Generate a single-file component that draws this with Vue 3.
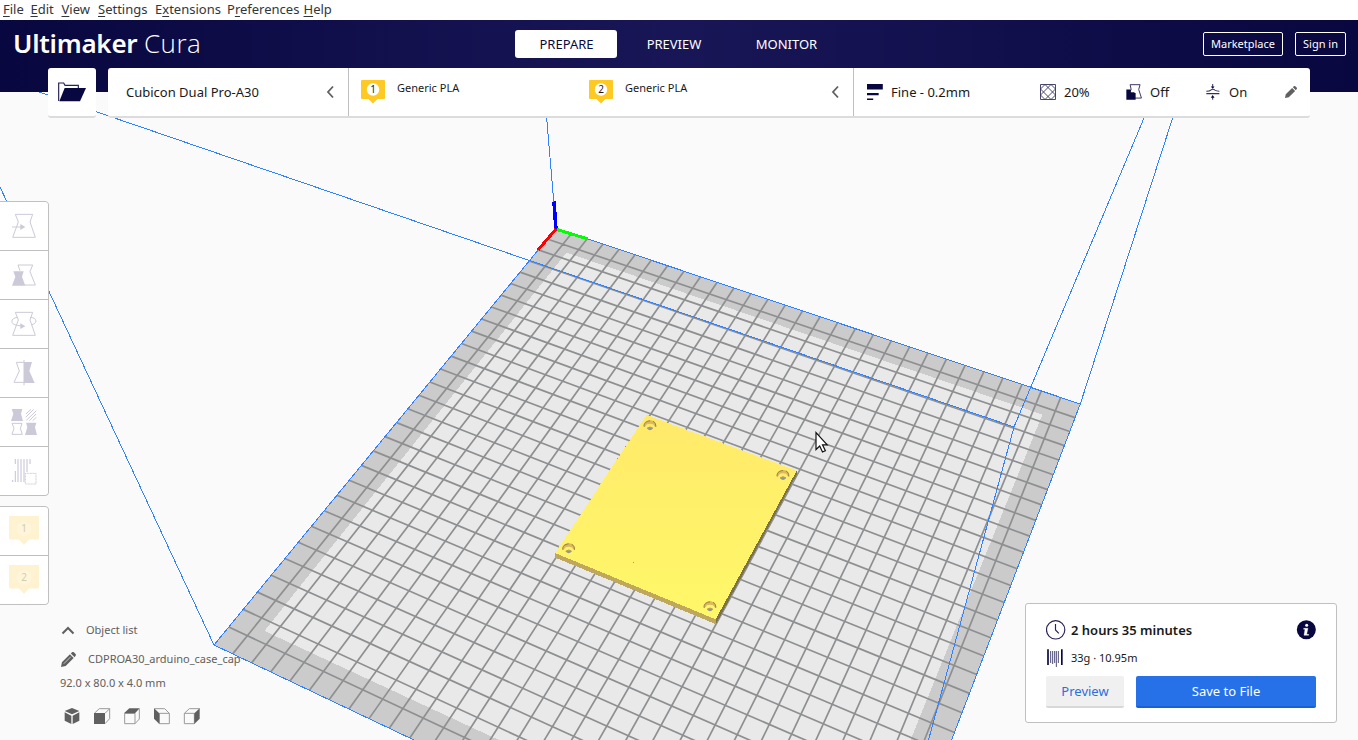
<script setup>
const menus = [
  { pre: '', key: 'F', post: 'ile', w: 27.5 },
  { pre: '', key: 'E', post: 'dit', w: 31 },
  { pre: '', key: 'V', post: 'iew', w: 36.5 },
  { pre: '', key: 'S', post: 'ettings', w: 57 },
  { pre: 'E', key: 'x', post: 'tensions', w: 72 },
  { pre: 'P', key: 'r', post: 'eferences', w: 76.5 },
  { pre: '', key: 'H', post: 'elp', w: 40 },
]
const materials = [
  { id: 1, name: 'Generic PLA' },
  { id: 2, name: 'Generic PLA' },
]

// Perspective projection of the unit build plate onto the viewport.
const A = [556, 228.3]
const B = [1080.3, 404]
const C = [214, 645]
const D = [868.8, 956]
const d1 = [B[0] - D[0], B[1] - D[1]]
const d2 = [C[0] - D[0], C[1] - D[1]]
const s = [A[0] - B[0] + D[0] - C[0], A[1] - B[1] + D[1] - C[1]]
const det = d1[0] * d2[1] - d1[1] * d2[0]
const g = (s[0] * d2[1] - s[1] * d2[0]) / det
const h = (d1[0] * s[1] - d1[1] * s[0]) / det
function project(u, v) {
  const w = 1 + g * u + h * v
  return [0, 1].map((i) =>
    ((A[i] + (B[i] - A[i] + g * B[i]) * u + (C[i] - A[i] + h * C[i]) * v) / w).toFixed(2)
  )
}
const quad = (m) =>
  [[m, m], [1 - m, m], [1 - m, 1 - m], [m, 1 - m]].map(([u, v]) => project(u, v).join(',')).join(' ')
const plate = quad(0)
const printable = quad(0.0505)
const cells = 30
let grid = ''
for (let i = 1; i < cells; i++) {
  const t = i / cells
  grid += `M${project(t, 0)}L${project(t, 1)}M${project(0, t)}L${project(1, t)}`
}
const holes = [[330, 76], [729, 225], [86, 445], [510, 619]].map(([x, y]) => [540 + x / 3, 400 + y / 3])
</script>

<template>
  <div class="window">
    <nav class="menubar">
      <span v-for="m in menus" :key="m.post" class="menu" :style="{ width: m.w + 'px' }">{{ m.pre }}<u>{{ m.key }}</u>{{ m.post }}</span>
    </nav>

    <header class="header">
      <div class="logo"><b>Ultimaker</b><span>Cura</span></div>
      <div class="stages">
        <button class="stage active">PREPARE</button>
        <button class="stage">PREVIEW</button>
        <button class="stage">MONITOR</button>
      </div>
      <div class="account">
        <button class="market">Marketplace</button>
        <button class="sign">Sign in</button>
      </div>
    </header>

    <main class="viewport">
      <svg class="scene" width="1358" height="648" viewBox="0 92 1358 648">
        <defs>
          <linearGradient id="top" x1="0" y1="0" x2="0" y2="1">
            <stop offset="0" stop-color="#ffea69" />
            <stop offset="1" stop-color="#fff869" />
          </linearGradient>
        </defs>
        <polygon :points="plate" fill="#cbcbcb" />
        <polygon :points="printable" fill="#e9e9e9" shape-rendering="crispEdges" />
        <path :d="grid" class="grid" />
        <polygon :points="plate" class="wire" />
        <path class="wire" d="M39 92L1014 427L1144 118M1080.300 404L1173.300 116M1014 427L928.500 740M556 228L546.500 116M214 645L49 291.500L0 187" />
        <path d="M556 230L554 201.500" stroke="#0000ff" stroke-width="3.600" shape-rendering="crispEdges" />
        <path d="M556 229L538 250" stroke="#ff0000" stroke-width="3" shape-rendering="crispEdges" />
        <path d="M557 229.500L588 239" stroke="#00ff00" stroke-width="3" shape-rendering="crispEdges" />
        <g shape-rendering="crispEdges">
          <path d="M796.700 470.500L797 474L716 624L713 617Z" fill="#7d7146" />
          <path d="M555 552L716 618.500L715.500 624L555 557.500Z" fill="#bfa75b" />
          <path d="M646.700 415L796.700 470.700L715.700 619.300L555 553Z" fill="url(#top)" />
          <path d="M633 562h1v1h-1zM625 446h1v1h-1zM617 458h1v1h-1z" fill="#aa9650" />
        </g>
        <g v-for="(p, i) in holes" :key="i" :transform="`translate(${p[0]} ${p[1]})`">
          <path d="M-6 1.500C-7-3-3-5 0-5S7-3 6 1.500L4.500 1C4-1 2.500-1.700 0-1.700S-4-1-4.500 1Z" fill="#dcb95a" />
          <path d="M-5.800 1.500C-6.500-2-4-4 0-4.500M5.800 1.500C6-1 5-3 3-4" fill="none" stroke="#988047" />
          <path d="M-3 3.200Q0 0.800 3 3.200Q0 6.800-3 3.200" fill="#969596" />
          <path d="M-3 2.900Q0 .5 3 2.900" fill="none" stroke="#b79a59" />
        </g>
        <path d="M816 432.500V449.500L819.700 446L822.500 452L825.400 450.700L822.500 444.800H827.200Z" fill="#fff" stroke="#111" stroke-width="1.200" />
      </svg>

      <div class="topbar">
        <button class="open">
          <svg width="48" height="48" viewBox="144 204 144 144">
            <path d="M176 303V249H191L195 256H235V266" fill="none" stroke="#262355" stroke-width="3.500" />
            <path d="M194 264H258L240 304H178Z" fill="#08073f" />
          </svg>
        </button>
        <div class="config">
          <section class="machine">
            <span>Cubicon Dual Pro-A30</span>
            <svg width="9" height="14" viewBox="0 0 9 14"><path d="M7 1.500L2 7L7 12.500" class="chev" /></svg>
          </section>
          <section class="materials">
            <div v-for="m in materials" :key="m.id" class="material">
              <svg width="24" height="24" viewBox="0 0 24 24">
                <path d="M1 0H23Q24 0 24 1V18Q24 19 23 19H16.500L12 23.500L7.500 19H1Q0 19 0 18V1Q0 0 1 0Z" fill="#ffc924" />
                <circle cx="12" cy="9.500" r="6.200" fill="#fff" />
                <text x="12" y="13" class="num">{{ m.id }}</text>
              </svg>
              <span>{{ m.name }}</span>
            </div>
            <svg class="mchev" width="9" height="14" viewBox="0 0 9 14"><path d="M7 1.500L2 7L7 12.500" class="chev" /></svg>
          </section>
          <section class="settings">
            <div class="set profile">
              <svg width="16" height="16" viewBox="139 191 46.600 46.600" fill="#08073f"><path d="M139 191h46v16h-46zM139 217h34v7h-34zM139 233h18v5h-18z" /></svg>
              <span>Fine - 0.2mm</span>
            </div>
            <div class="set infill">
              <svg width="16" height="16" viewBox="0 0 16 16" fill="none" stroke="#34315f" stroke-width=".9">
                <path d="M.5 .5H15.500V15.500H.5ZM.5 5L5 .5L15.500 11M.5 11L11 .5L15.500 5M5 15.500L.5 11M.5 5L11 15.500L15.500 11M15.500 5L5 15.500" />
              </svg>
              <span>20%</span>
            </div>
            <div class="set support">
              <svg width="16" height="16" viewBox="893 191 46.600 46.600">
                <path d="M905 193H934L930 207L938 232H917V216H903L908 207Z" fill="#fff" stroke="#34315f" stroke-width="2.800" />
                <path d="M894 207H907V217H921V237H894Z" fill="#08073f" />
              </svg>
              <span>Off</span>
            </div>
            <div class="set adhesion">
              <svg width="14" height="16" viewBox="1127 191 40.800 46.600" fill="none" stroke="#34315f" stroke-width="3">
                <path d="M1128 212Q1138 212 1141 209Q1147 204 1153 209Q1157 212 1166 212M1128 219H1166M1146.500 191V200M1146.500 229V237" />
                <path d="M1141 198H1152L1146.500 205ZM1141 231H1152L1146.500 223Z" fill="#08073f" stroke="none" />
              </svg>
              <span>On</span>
            </div>
            <svg class="pencil" width="12" height="12" viewBox="0 0 16 16" fill="#606060"><path d="M0 16L1 11L9.500 2.500L13.500 6.500L5 15ZM10.500 1.500L12 0Q13 -.5 14 .5L15.500 2Q16.500 3 15.500 4L14.500 5.500Z" /></svg>
          </section>
        </div>
      </div>

      <aside class="tools">
        <button><svg viewBox="0 66 144 144"><path class="o" d="M46 103H98L90 126L106 172H38L55 126ZM36 141H64" /><path class="f" d="M61 132L76 141L61 150Z" /></svg></button>
        <button><svg viewBox="0 213 144 144"><path class="o" d="M54 255H98L90 275L106 315H75M54 255L60 272" /><path class="f" d="M40 274H71L66 290L76 317H36L46 290Z" /></svg></button>
        <button><svg viewBox="0 360 144 144"><path class="o" d="M46 397H98L90 420L106 466H38L55 420ZM53 412C30 414 30 434 52 436L66 438M91 412C113 413 113 432 94 434" /><path class="f" d="M61 430L76 439L61 447Z" /></svg></button>
        <button><svg viewBox="0 507 144 144"><path class="o" d="M72 540V616M72 547H49L58 573L42 607H72" /><path class="f" d="M72 546H96L88 573L104 609H72Z" /></svg></button>
        <button><svg viewBox="0 24 144 144"><path class="f" d="M35 57H67L63 71L69 93H33L40 71ZM78 98H109L105 112L111 135H75L82 112Z" /><path class="o" d="M36 100H66L61 115L67 133H36L42 115Z" /><path class="o" d="M78 72L93 58M77 82L101 58M79 91L109 62M88 92L108 72M98 92L109 82" /></svg></button>
        <button><svg viewBox="0 171 144 144"><path d="M46 207V222M46 243V276M54 207V276M63 207V276M72 207V276M81 207V246M90 207V222M38 270V276" fill="none" stroke="#ccc9d9" stroke-width="3.500" /><path class="o" stroke-dasharray="3 1.500" d="M76 250H108V282H76Z" /></svg></button>
      </aside>

      <aside class="extruders">
        <button v-for="n in 2" :key="n">
          <svg viewBox="0 0 48 48">
            <path d="M10 9H38Q39 9 39 10V31Q39 32.500 37.500 32.500H29L24 38L19 32.500H10.500Q9 32.500 9 31V10Q9 9 10 9Z" fill="#fff2d0" />
            <circle cx="24" cy="21.500" r="7.500" fill="#fff5db" />
            <text x="24" y="24.800" class="exnum">{{ n }}</text>
          </svg>
        </button>
      </aside>

      <div class="objects">
        <div class="row list">
          <svg width="14" height="9" viewBox="0 0 14 9"><path d="M1.500 7.500L7 2L12.500 7.500" fill="none" stroke="#606060" stroke-width="2" /></svg>
          <span>Object list</span>
        </div>
        <div class="row name">
          <svg width="15" height="15" viewBox="0 0 16 16" fill="#606060"><path d="M0 16L1 11L9.500 2.500L13.500 6.500L5 15ZM10.500 1.500L12 0Q13 -.5 14 .5L15.500 2Q16.500 3 15.500 4L14.500 5.500Z" /><path d="M3 12.500L10.500 5" stroke="#fafafa" stroke-width=".7" /></svg>
          <span>CDPROA30_arduino_case_cap</span>
        </div>
        <div class="dims">92.0 x 80.0 x 4.0 mm</div>
        <div class="views">
          <svg viewBox="61 282 72 72"><path class="c" d="M75 303L97 294L119 303L97 313ZM75 307L95 317V342L75 332ZM119 307L99 317V342L119 332Z" /></svg>
          <svg viewBox="150 282 72 72"><path class="l" d="M163 310L178 296H209V326L195 341M195 310L209 296" /><path class="c" d="M162 309H195V342H162Z" /></svg>
          <svg viewBox="240 282 72 72"><path class="l" d="M254 310H285V341H254ZM285 341L298 327V296" /><path class="c" d="M252 310L268 295H299L285 310Z" /></svg>
          <svg viewBox="330 282 72 72"><path class="l" d="M358 310H388V341H358ZM343 296H374L388 310" /><path class="c" d="M342 295L358 310V342L342 326Z" /></svg>
          <svg viewBox="420 282 72 72"><path class="l" d="M433 310H463V341H433ZM433 310L448 296H479" /><path class="c" d="M463 310L479 295V326L463 342Z" /></svg>
        </div>
      </div>

      <section class="output">
        <div class="time">
          <svg width="20" height="20" viewBox="107.500 89 60 60" fill="none" stroke="#262355"><circle cx="136.500" cy="118.500" r="27.500" stroke-width="3.500" /><path d="M136 101V119L146 129" stroke-width="3.500" /></svg>
          <strong>2 hours 35 minutes</strong>
          <svg class="info" width="20" height="20" viewBox="858 89 60 60"><circle cx="889" cy="118" r="28.500" fill="#08073f" /><circle cx="890" cy="105" r="4.500" fill="#fff" /><path d="M881 114H894L890 132H896V135H882L885 117H881Z" fill="#fff" stroke="#fff" stroke-width="1" /></svg>
        </div>
        <div class="usage">
          <svg width="16" height="18" viewBox="113 174 48 54" stroke="#34315f" stroke-width="2.600"><path d="M124 180V216M130 180V219M136 180V216M141 180V228M147 180V216" /><path d="M116 175V222M157.500 175V222" stroke="#08073f" stroke-width="5" /></svg>
          <span>33g · 10.95m</span>
        </div>
        <div class="actions">
          <button class="preview">Preview</button>
          <button class="save">Save to File</button>
        </div>
      </section>
    </main>
  </div>
</template>

<style>
html, body { margin: 0; overflow: hidden; }
</style>

<style scoped>
.window { width: 1358px; height: 740px; display: flex; flex-direction: column; background: #fafafa; font-family: "Noto Sans", "Open Sans", sans-serif; font-size: 13px; color: #191919; overflow: hidden; }
button { font: inherit; color: inherit; border: 0; padding: 0; margin: 0; background: none; box-sizing: border-box; }
svg { display: block; flex: none; }
.menubar { height: 20px; flex: none; display: flex; align-items: flex-start; padding-left: 3px; background: #fff; color: #31363b; font-size: 13px; line-height: 18px; box-sizing: border-box; white-space: nowrap; }
.menu { flex: none; }
.menu u { text-underline-offset: 2px; text-decoration-thickness: 1px; }
.header { height: 72px; flex: none; display: flex; background: linear-gradient(90deg, #08073f 0%, #191657 50%, #08073f 100%); color: #fff; box-sizing: border-box; }
.logo { width: 515px; padding-left: 13px; height: 46px; box-sizing: border-box; display: flex; align-items: center; font-size: 26px; white-space: nowrap; }
.logo b { font-weight: 600; width: 131px; letter-spacing: -.25px; }
.logo span { font-weight: 300; font-family: "Open Sans", "Noto Sans", sans-serif; letter-spacing: .45px; }
.stages { display: flex; gap: 10px; padding-top: 10px; width: 688px; }
.stage { height: 28px; width: 102px; border-radius: 3px; }
.active { padding-left: 1px; }
.stage:nth-child(2) { width: 94px; }
.stage:nth-child(3) { width: 110px; padding-left: 1px; }
.active { background: #fff; color: #08073f; }
.account { display: flex; gap: 12px; padding-top: 12px; }
.account button { border: 1px solid #fff; border-radius: 2px; height: 24px; font-size: 11px; line-height: 15px; padding-bottom: 1px; }
.market { width: 80px; }
.sign { width: 51px; }
.viewport { position: relative; height: 648px; }
.scene { position: absolute; left: 0; top: 0; }
.grid { stroke: #8e8f91; stroke-width: 1.700; fill: none; }
.wire { stroke: #3282ff; stroke-width: 1; fill: none; shape-rendering: crispEdges; }
.topbar { position: absolute; left: 48px; top: -24px; display: flex; gap: 12px; }
.open, .config { height: 50px; background: #fff; border-bottom: 2px solid #dcdcdc; border-radius: 3px; box-sizing: border-box; }
.open { width: 48px; }
.config { width: 1202px; display: flex; }
.machine { display: flex; align-items: center; justify-content: space-between; padding: 0 13px 0 18px; border-right: 1px solid #c0c0c0; width: 209px; }
.chev { fill: none; stroke: #606060; stroke-width: 1.800; }
.materials { width: 504px; display: flex; border-right: 1px solid #c0c0c0; }
.material { width: 228px; display: flex; padding: 12px 0 0 12px; gap: 12px; box-sizing: border-box; font-size: 11px; line-height: 16px; }
.mchev { margin: 17px 0 0 26px; }
.num { font-size: 10px; text-anchor: middle; fill: #191919; }
.settings { display: flex; align-items: center; padding-left: 13px; white-space: nowrap; }
.set { display: flex; align-items: center; gap: 7px; }
.profile { width: 173px; gap: 8px; }
.infill { width: 86px; gap: 8px; }
.support { width: 80px; gap: 8px; }
.adhesion { width: 79px; gap: 9px; }
.tools, .extruders { position: absolute; left: -1px; width: 50px; display: flex; flex-direction: column; gap: 1px; background: #c0c0c0; border: 1px solid #c0c0c0; border-radius: 0 4px 4px 0; box-sizing: border-box; overflow: hidden; }
.tools { top: 109px; }
.extruders { top: 414px; }
.tools button, .extruders button { width: 48px; height: 48px; background: #fff; }
.tools svg, .extruders svg { width: 48px; height: 48px; }
.o { fill: none; stroke: #ccc9d9; stroke-width: 3; }
.f { fill: #ccc9d9; }
.exnum { font-size: 10px; text-anchor: middle; fill: #d8cbaa; }
.objects { position: absolute; left: 60px; top: 530px; color: #606060; font-size: 11px; white-space: nowrap; }
.row { display: flex; align-items: center; line-height: 16px; }
.list { gap: 11px; padding-left: 1px; }
.name { gap: 12px; padding-left: 1px; margin-top: 13px; }
.dims { line-height: 16px; margin-top: 8px; }
.views { display: flex; gap: 6px; margin-top: 13px; }
.views svg { width: 24px; height: 24px; }
.c { fill: #606060; }
.l { fill: none; stroke: #9b9b9b; stroke-width: 3; }
.output { position: absolute; left: 1025px; top: 511px; width: 312px; height: 120px; background: #fff; border: 1px solid #c0c0c0; border-radius: 3px; box-sizing: border-box; padding: 16px 20px 0; }
.time { display: flex; align-items: center; height: 20px; gap: 5px; }
.time strong { font-weight: 600; font-size: 13px; }
.info { margin-left: auto; }
.usage { display: flex; align-items: center; height: 18px; gap: 8px; margin: 9px 0 0 1px; font-size: 11px; }
.usage span { line-height: 16px; }
.actions { display: flex; gap: 12px; margin-top: 9px; }
.actions button { height: 32px; border-radius: 2px; }
.preview { width: 78px; background: #f0f0f0; color: #2a6fdc; border-bottom: 2px solid #d8d8d8; }
.save { width: 180px; background: #2671e8; color: #fff; border-bottom: 2px solid #1b60d0; }
</style>
